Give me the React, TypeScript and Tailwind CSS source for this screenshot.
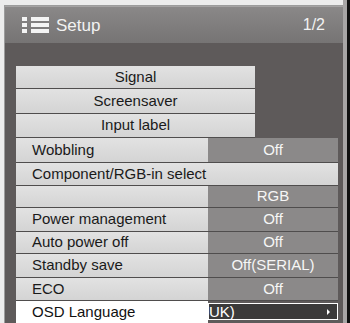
import React from 'react';

type Item = {
    label: string;
    value?: string;
    h: number;
    kind: 'sub' | 'full' | 'pair' | 'active';
};

const items: Item[] = [
    { label: 'Signal', h: 23, kind: 'sub' },
    { label: 'Screensaver', h: 25, kind: 'sub' },
    { label: 'Input label', h: 24, kind: 'sub' },
    { label: 'Wobbling', value: 'Off', h: 25, kind: 'pair' },
    { label: 'Component/RGB-in select', h: 23, kind: 'full' },
    { label: '', value: 'RGB', h: 22, kind: 'pair' },
    { label: 'Power management', value: 'Off', h: 24, kind: 'pair' },
    { label: 'Auto power off', value: 'Off', h: 22, kind: 'pair' },
    { label: 'Standby save', value: 'Off(SERIAL)', h: 24, kind: 'pair' },
    { label: 'ECO', value: 'Off', h: 23, kind: 'pair' },
    { label: 'OSD Language', value: 'UK)', h: 22, kind: 'active' },
];

function ListIcon() {
    return (
        <svg width="27" height="17" viewBox="0 0 27 17" className="shrink-0">
            {[0, 6, 12].map((y) => (
                <g key={y} fill="#f4f4f4">
                    <rect x="0" y={y} width="5" height="4" />
                    <rect x="9" y={y} width="18" height="4" />
                </g>
            ))}
        </svg>
    );
}

function MenuRow({ item }: { item: Item }) {
    const style = { height: item.h };

    if (item.kind === 'sub') {
        return (
            <div style={style} className="w-[239px] flex items-center justify-center bg-gradient-to-b from-[#e2e2e2] to-[#d4d4d4] border-b border-[#4f4d4d] text-[15px] text-[#1a1a1a]">
                {item.label}
            </div>
        );
    }

    if (item.kind === 'full') {
        return (
            <div style={style} className="w-[322px] flex items-center pl-4 bg-gradient-to-b from-[#e2e2e2] to-[#d4d4d4] border-b border-[#4f4d4d] text-[15px] text-[#1a1a1a]">
                {item.label}
            </div>
        );
    }

    if (item.kind === 'active') {
        return (
            <div style={style} className="w-[322px] flex">
                <div className="w-[192px] flex items-center pl-4 bg-white text-[15px] text-[#111]">
                    {item.label}
                </div>
                <div className="w-[130px] mt-[2px] mb-[3px] flex items-center justify-between border border-white bg-[#3b3a3a] text-[15px] text-white pr-[7px]">
                    <span className="leading-none">{item.value}</span>
                    <span className="w-0 h-0 border-y-[3px] border-y-transparent border-l-[3px] border-l-white" />
                </div>
            </div>
        );
    }

    return (
        <div style={style} className="w-[322px] flex border-b border-[#4f4d4d] text-[15px]">
            <div className="w-[192px] flex items-center pl-4 bg-gradient-to-b from-[#e2e2e2] to-[#d4d4d4] text-[#1a1a1a]">
                {item.label}
            </div>
            <div className="w-[130px] flex items-center justify-center bg-[#8b8989] text-[#f6f6f6]">
                {item.value}
            </div>
        </div>
    );
}

export default function App() {
    return (
        <div className="w-[350px] h-[323px] flex bg-[#ececec] overflow-hidden font-['Liberation_Sans',Arial,sans-serif]">
            <div className="w-[4px] shrink-0" />
            <div className="w-[339px] mt-[5px] flex flex-col border-l border-t border-[#9c9c9c]">
                {/* Header */}
                <div className="h-[37px] flex items-center justify-between pl-[17px] pr-[18px] bg-gradient-to-b from-[#8a8888] to-[#767474] border-t border-[#a5a3a3]">
                    <div className="flex items-center gap-[7px]">
                        <ListIcon />
                        <span className="text-[17px] text-[#f2f2f2] leading-none">Setup</span>
                    </div>
                    <span className="text-[16px] text-[#f2f2f2] leading-none">1/2</span>
                </div>

                {/* Body */}
                <div className="flex-1 bg-[#5e5a5a] pl-[11px] pt-[23px] flex flex-col">
                    {items.map((item, i) => (
                        <MenuRow key={i} item={item} />
                    ))}
                </div>
            </div>
            <div className="w-[4px] shrink-0 bg-[#a8a6a6]" />
            <div className="w-[3px] shrink-0 bg-[#111]" />
        </div>
    );
}
